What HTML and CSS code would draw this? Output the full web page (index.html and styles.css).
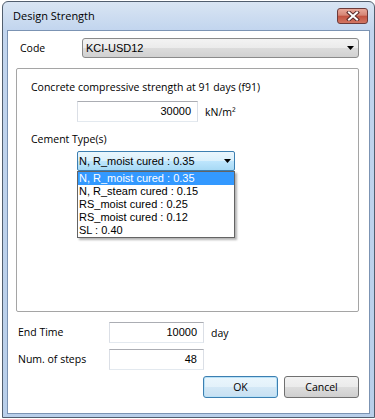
FILE: index.html
```html
<!DOCTYPE html>
<html>
<head>
<meta charset="utf-8">
<link rel="stylesheet" href="styles.css">
</head>
<body>
<div class="window">
  <div class="titlebar">
    <span class="title">Design Strength</span>
    <div class="close">
      <svg width="14" height="10" viewBox="0 0 14 10">
        <path d="M3 1.5 L11 8.5 M11 1.5 L3 8.5" stroke="#5a2b2b" stroke-width="4" stroke-linecap="square" fill="none"/>
        <path d="M3 1.5 L11 8.5 M11 1.5 L3 8.5" stroke="#ffffff" stroke-width="2" stroke-linecap="square" fill="none"/>
      </svg>
    </div>
  </div>
  <div class="client">
    <div class="code-row">
      <span class="label code-label">Code</span>
      <div class="select">
        <span class="sel-text">KCI-USD12</span>
        <svg class="arrow" width="7" height="4" viewBox="0 0 7 4"><path d="M0 0 H7 L3.5 4 Z" fill="#000"/></svg>
      </div>
    </div>
    <div class="group">
      <div class="glabel">Concrete compressive strength at 91 days (f91)</div>
      <div class="inrow">
        <div class="textbox tb-strength">30000</div>
        <span class="unit">kN/m²</span>
      </div>
      <div class="glabel cement">Cement Type(s)</div>
      <div class="combo-wrap">
        <div class="combo">
          <span class="combo-text">N, R_moist cured : 0.35</span>
          <svg class="arrow" width="7" height="4" viewBox="0 0 7 4"><path d="M0 0 H7 L3.5 4 Z" fill="#000"/></svg>
        </div>
        <ul class="dropdown">
          <li class="item selected">N, R_moist cured : 0.35</li>
          <li class="item">N, R_steam cured : 0.15</li>
          <li class="item">RS_moist cured : 0.25</li>
          <li class="item">RS_moist cured : 0.12</li>
          <li class="item">SL : 0.40</li>
        </ul>
      </div>
    </div>
    <div class="field-row first">
      <span class="label field-label">End Time</span>
      <div class="textbox tb-field">10000</div>
      <span class="unit day">day</span>
    </div>
    <div class="field-row">
      <span class="label field-label">Num. of steps</span>
      <div class="textbox tb-field">48</div>
    </div>
    <div class="buttons">
      <div class="btn ok">OK</div>
      <div class="btn">Cancel</div>
    </div>
  </div>
</div>
</body>
</html>
```

FILE: styles.css
```css
html, body {
  margin: 0;
  padding: 0;
  background: #ffffff;
}
body {
  font-family: "Open Sans", "Noto Sans", sans-serif;
  font-size: 10.5px;
  color: #000;
}
.window {
  box-sizing: border-box;
  width: 373px;
  height: 417px;
  margin: 1px 0 0 2px;
  border: 1px solid #515e6e;
  border-radius: 6px 6px 0 0;
  background: linear-gradient(#d9e5f3, #c2d5ee 28px, #b9cfea);
  padding: 0 4px 3px 4px;
  display: flex;
  flex-direction: column;
}
.titlebar {
  height: 28px;
  display: flex;
  justify-content: space-between;
  align-items: flex-start;
  padding-left: 6px;
}
.title {
  font-size: 11px;
  line-height: 16px;
  margin-top: 6px;
}
.close {
  box-sizing: border-box;
  width: 31px;
  height: 16px;
  margin-top: 6px;
  margin-right: 2px;
  border: 1px solid #6b3a3a;
  border-radius: 3px;
  background: linear-gradient(#e9a899, #d58575 45%, #c2513f 50%, #d27663);
  display: flex;
  align-items: center;
  justify-content: center;
}
.client {
  flex: 1;
  background: #ffffff;
  border: 1px solid #7b93b3;
  display: flex;
  flex-direction: column;
}
.label {
  line-height: 15px;
}
.code-row {
  display: flex;
  align-items: center;
  margin-top: 7px;
  padding-left: 12px;
  height: 20px;
}
.code-label {
  width: 62px;
}
.select {
  box-sizing: border-box;
  width: 277px;
  height: 20px;
  border: 1px solid #8a8a8a;
  border-radius: 3px;
  background: linear-gradient(#f3f3f3, #ebebeb 50%, #dcdcdc 50%, #d1d1d1);
  display: flex;
  align-items: center;
  justify-content: space-between;
  padding: 0 4px 0 3px;
  font-family: "Liberation Sans", Arial, sans-serif;
  font-size: 11px;
}
.group {
  box-sizing: border-box;
  margin: 10px 0 0 8px;
  width: 343px;
  height: 244px;
  border: 1px solid #a5a5a5;
  border-radius: 2px;
  display: flex;
  flex-direction: column;
}
.glabel {
  line-height: 15px;
  margin: 11px 0 0 14px;
}
.glabel.cement {
  margin-top: 10px;
}
.inrow {
  display: flex;
  align-items: center;
  margin: 6px 0 0 60px;
}
.textbox {
  box-sizing: border-box;
  height: 21px;
  border: 1px solid #dbdfe6;
  border-top-color: #abadb3;
  border-bottom-color: #e3e9ef;
  text-align: right;
  padding-right: 6px;
  line-height: 19px;
  font-family: "Liberation Sans", Arial, sans-serif;
  font-size: 11px;
}
.tb-strength {
  width: 121px;
}
.unit {
  margin-left: 7px;
}
.combo-wrap {
  position: relative;
  margin: 4px 0 0 60px;
  width: 158px;
}
.combo {
  box-sizing: border-box;
  height: 20px;
  border: 1px solid #3c7fb1;
  border-radius: 2px;
  background: linear-gradient(#eaf6fd, #d9f0fc 50%, #bee6fd 50%, #a7d9f5);
  display: flex;
  align-items: center;
  justify-content: space-between;
  padding: 0 3px 0 1px;
  font-family: "Liberation Sans", Arial, sans-serif;
  font-size: 11px;
}
.dropdown {
  position: absolute;
  top: 20px;
  left: 0;
  box-sizing: border-box;
  width: 158px;
  margin: 0;
  padding: 0;
  list-style: none;
  background: #fff;
  border: 1px solid #646464;
  box-shadow: 2px 2px 2px rgba(0, 0, 0, 0.3);
  font-family: "Liberation Sans", Arial, sans-serif;
  font-size: 11px;
}
.item {
  height: 13px;
  line-height: 13px;
  padding-left: 1px;
}
.item.selected {
  background: #3399ff;
  color: #fff;
}
.field-row {
  display: flex;
  align-items: center;
  margin-top: 6px;
  padding-left: 10px;
}
.field-row.first {
  margin-top: 10px;
}
.field-label {
  width: 91px;
}
.tb-field {
  width: 95px;
}
.unit.day {
  margin-left: 7px;
}
.buttons {
  display: flex;
  justify-content: flex-end;
  gap: 6px;
  margin-top: 6px;
  padding-right: 10px;
}
.btn {
  box-sizing: border-box;
  width: 75px;
  height: 22px;
  border: 1px solid #707070;
  border-radius: 3px;
  background: linear-gradient(#f2f2f2, #ebebeb 50%, #dddddd 50%, #cfcfcf);
  text-align: center;
  line-height: 20px;
}
.btn.ok {
  border-color: #3c7fb1;
  box-shadow: inset 0 0 0 1px #b8e1f7;
  background: linear-gradient(#eaf6fd, #e3f1fa 50%, #d3e8f6 50%, #c8e0f2);
}
```
